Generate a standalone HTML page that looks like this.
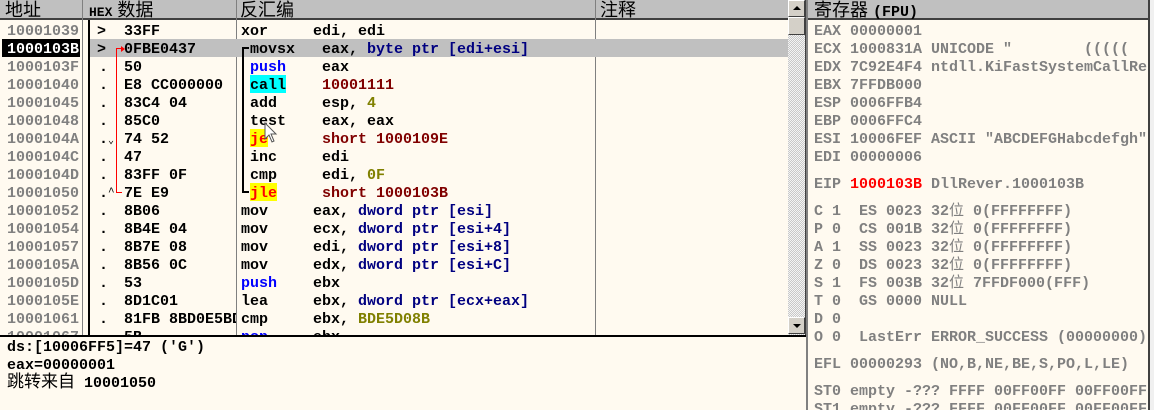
<!DOCTYPE html>
<html><head><meta charset="utf-8"><style>
*{margin:0;padding:0;box-sizing:border-box}
body{width:1154px;height:410px;overflow:hidden;background:#fffaf0;position:relative;font-family:"Liberation Mono","DejaVu Sans Mono",monospace;font-size:15px;font-weight:bold;}
.t{position:absolute;white-space:pre;line-height:21px;height:18px}
.h{position:absolute;white-space:pre;font-family:"Liberation Sans","Noto Sans CJK SC",sans-serif;font-weight:normal;font-size:18px;line-height:20px;top:0}
.g{color:#808080}
.k{color:#000}
.b{color:#0000ff}
.n{color:#000080}
.r{color:#800000}
.o{color:#808000}
.cy{background:#00ffff;line-height:18px;top:auto}
.ye{background:#ffff00;color:#ff0000}
.cj{font-family:"Liberation Mono","Noto Sans CJK SC",monospace;font-weight:normal}
</style></head><body>
<div style="position:absolute;left:0;top:0;width:806px;height:337px;overflow:hidden;border-bottom:2px solid #000">
 <div style="position:absolute;left:0;top:0;width:788px;height:20px;background:#c0c0c0;border-bottom:2px solid #404040"></div>
 <div style="position:absolute;left:82px;top:0;width:1px;height:20px;background:#808080"></div>
 <div style="position:absolute;left:236px;top:0;width:1px;height:335px;background:#808080"></div>
 <div style="position:absolute;left:595px;top:0;width:1px;height:335px;background:#808080"></div>
 <div class="h" style="left:5px">地址</div>
 <div class="h" style="left:89px"><b style="font-family:'Liberation Mono';font-size:13px">HEX</b> 数据</div>
 <div class="h" style="left:240px">反汇编</div>
 <div class="h" style="left:600px">注释</div>
 <div style="position:absolute;left:82px;top:20px;width:1px;height:320px;background:#808080"></div>
 <div style="position:absolute;left:88px;top:20px;width:2px;height:320px;background:#000"></div>
 <div style="position:absolute;left:90px;top:39px;width:698px;height:18px;background:#c0c0c0"></div>
 <div style="position:absolute;left:2px;top:39px;width:78px;height:18px;background:#000"></div>
 <div style="position:absolute;left:116px;top:48px;width:1px;height:145px;background:#ff0000"></div>
 <div style="position:absolute;left:116px;top:48px;width:6px;height:1px;background:#ff0000"></div>
 <div style="position:absolute;left:116px;top:192px;width:6px;height:1px;background:#ff0000"></div>
 <div style="position:absolute;left:121px;top:46px;width:0;height:0;border-left:4px solid #ff0000;border-top:3px solid transparent;border-bottom:3px solid transparent"></div>
 <div style="position:absolute;left:242px;top:47px;width:2px;height:146px;background:#000"></div>
 <div style="position:absolute;left:242px;top:47px;width:7px;height:2px;background:#000"></div>
 <div style="position:absolute;left:242px;top:191px;width:7px;height:2px;background:#000"></div>

 <div class="t g" style="left:7px;top:21px">10001039</div>
 <div class="t" style="left:7px;top:39px;color:#fff">1000103B</div>
 <div class="t g" style="left:7px;top:57px">1000103F</div>
 <div class="t g" style="left:7px;top:75px">10001040</div>
 <div class="t g" style="left:7px;top:93px">10001045</div>
 <div class="t g" style="left:7px;top:111px">10001048</div>
 <div class="t g" style="left:7px;top:129px">1000104A</div>
 <div class="t g" style="left:7px;top:147px">1000104C</div>
 <div class="t g" style="left:7px;top:165px">1000104D</div>
 <div class="t g" style="left:7px;top:183px">10001050</div>
 <div class="t g" style="left:7px;top:201px">10001052</div>
 <div class="t g" style="left:7px;top:219px">10001054</div>
 <div class="t g" style="left:7px;top:237px">10001057</div>
 <div class="t g" style="left:7px;top:255px">1000105A</div>
 <div class="t g" style="left:7px;top:273px">1000105D</div>
 <div class="t g" style="left:7px;top:291px">1000105E</div>
 <div class="t g" style="left:7px;top:309px">10001061</div>
 <div class="t g" style="left:7px;top:327px">10001067</div>

 <div class="t" style="left:97px;top:21px">&gt;</div><div class="t" style="left:124px;top:21px">33FF</div>
 <div class="t" style="left:97px;top:39px">&gt;</div><div class="t" style="left:124px;top:39px">0FBE0437</div>
 <div class="t" style="left:99px;top:57px">.</div><div class="t" style="left:124px;top:57px">50</div>
 <div class="t" style="left:99px;top:75px">.</div><div class="t" style="left:124px;top:75px">E8 CC000000</div>
 <div class="t" style="left:99px;top:93px">.</div><div class="t" style="left:124px;top:93px">83C4 04</div>
 <div class="t" style="left:99px;top:111px">.</div><div class="t" style="left:124px;top:111px">85C0</div>
 <div class="t" style="left:99px;top:129px">.<span style="font-size:10px;font-weight:normal">&#8964;</span></div><div class="t" style="left:124px;top:129px">74 52</div>
 <div class="t" style="left:99px;top:147px">.</div><div class="t" style="left:124px;top:147px">47</div>
 <div class="t" style="left:99px;top:165px">.</div><div class="t" style="left:124px;top:165px">83FF 0F</div>
 <div class="t" style="left:99px;top:183px">.<span style="font-size:11px;font-weight:normal;vertical-align:top">^</span></div><div class="t" style="left:124px;top:183px">7E E9</div>
 <div class="t" style="left:99px;top:201px">.</div><div class="t" style="left:124px;top:201px">8B06</div>
 <div class="t" style="left:99px;top:219px">.</div><div class="t" style="left:124px;top:219px">8B4E 04</div>
 <div class="t" style="left:99px;top:237px">.</div><div class="t" style="left:124px;top:237px">8B7E 08</div>
 <div class="t" style="left:99px;top:255px">.</div><div class="t" style="left:124px;top:255px">8B56 0C</div>
 <div class="t" style="left:99px;top:273px">.</div><div class="t" style="left:124px;top:273px">53</div>
 <div class="t" style="left:99px;top:291px">.</div><div class="t" style="left:124px;top:291px">8D1C01</div>
 <div style="position:absolute;left:90px;top:309px;width:146px;height:18px;overflow:hidden"><div class="t" style="left:9px;top:0">.</div><div class="t" style="left:34px;top:0">81FB 8BD0E5BD</div></div>
 <div class="t" style="left:124px;top:327px">5B</div>

 <div class="t" style="left:241px;top:21px">xor</div><div class="t" style="left:313px;top:21px">edi, edi</div>
 <div class="t" style="left:250px;top:39px">movsx</div><div class="t" style="left:322px;top:39px">eax, <span class="n">byte ptr [edi+esi]</span></div>
 <div class="t b" style="left:250px;top:57px">push</div><div class="t" style="left:322px;top:57px">eax</div>
 <div class="t" style="left:250px;top:75px;background:#00ffff">call</div><div class="t r" style="left:322px;top:75px">10001111</div>
 <div class="t" style="left:250px;top:93px">add</div><div class="t" style="left:322px;top:93px">esp, <span class="o">4</span></div>
 <div class="t" style="left:250px;top:111px">test</div><div class="t" style="left:322px;top:111px">eax, eax</div>
 <div class="t ye" style="left:250px;top:129px">je</div><div class="t r" style="left:322px;top:129px">short 1000109E</div>
 <div class="t" style="left:250px;top:147px">inc</div><div class="t" style="left:322px;top:147px">edi</div>
 <div class="t" style="left:250px;top:165px">cmp</div><div class="t" style="left:322px;top:165px">edi, <span class="o">0F</span></div>
 <div class="t ye" style="left:250px;top:183px">jle</div><div class="t r" style="left:322px;top:183px">short 1000103B</div>
 <div class="t" style="left:241px;top:201px">mov</div><div class="t" style="left:313px;top:201px">eax, <span class="n">dword ptr [esi]</span></div>
 <div class="t" style="left:241px;top:219px">mov</div><div class="t" style="left:313px;top:219px">ecx, <span class="n">dword ptr [esi+4]</span></div>
 <div class="t" style="left:241px;top:237px">mov</div><div class="t" style="left:313px;top:237px">edi, <span class="n">dword ptr [esi+8]</span></div>
 <div class="t" style="left:241px;top:255px">mov</div><div class="t" style="left:313px;top:255px">edx, <span class="n">dword ptr [esi+C]</span></div>
 <div class="t b" style="left:241px;top:273px">push</div><div class="t" style="left:313px;top:273px">ebx</div>
 <div class="t" style="left:241px;top:291px">lea</div><div class="t" style="left:313px;top:291px">ebx, <span class="n">dword ptr [ecx+eax]</span></div>
 <div class="t" style="left:241px;top:309px">cmp</div><div class="t" style="left:313px;top:309px">ebx, <span class="o">BDE5D08B</span></div>
 <div class="t b" style="left:241px;top:327px">pop</div><div class="t" style="left:313px;top:327px">ebx</div>
 <svg style="position:absolute;left:264px;top:122px" width="16" height="24" viewBox="0 0 16 24"><path d="M1 1 L1 17 L5 13 L8 20 L10 19 L7 12 L12 12 Z" fill="#fff" stroke="#555" stroke-width="1"/></svg>
 <div style="position:absolute;left:788px;top:0;width:17px;height:335px;background:repeating-conic-gradient(#c8c8c8 0 25%,#f4f4f4 0 50%) 0 0/2px 2px"></div>
 <div style="position:absolute;left:788px;top:0;width:17px;height:17px;background:#d4d0c8;border:1px solid;border-color:#fff #404040 #404040 #fff"></div>
 <div style="position:absolute;left:793px;top:6px;border-left:4px solid transparent;border-right:4px solid transparent;border-bottom:4px solid #000"></div>
 <div style="position:absolute;left:788px;top:17px;width:17px;height:18px;background:#d4d0c8;border:1px solid;border-color:#fff #404040 #404040 #fff"></div>
 <div style="position:absolute;left:788px;top:317px;width:17px;height:17px;background:#d4d0c8;border:1px solid;border-color:#fff #404040 #404040 #fff"></div>
 <div style="position:absolute;left:793px;top:324px;border-left:4px solid transparent;border-right:4px solid transparent;border-top:4px solid #000"></div>
 <div style="position:absolute;left:805px;top:0;width:1px;height:337px;background:#404040"></div>
</div>
<div class="t" style="left:7px;top:337px">ds:[10006FF5]=47 ('G')</div>
<div class="t" style="left:7px;top:355px">eax=00000001</div>
<div class="t" style="left:7px;top:373px"><span class="cj" style="font-size:17px">跳转来自</span> 10001050</div>
<div style="position:absolute;left:806px;top:0;width:2px;height:410px;background:#808080"></div>
<div style="position:absolute;left:808px;top:0;width:340px;height:20px;background:#c0c0c0;border-bottom:2px solid #404040"></div>
<div class="h" style="left:814px">寄存器 <b style="font-family:'Liberation Mono';font-size:15px">(FPU)</b></div>
<div style="position:absolute;left:1148px;top:0;width:2px;height:410px;background:#404040"></div>
<div style="position:absolute;left:1150px;top:0;width:4px;height:410px;background:#f0f0f0"></div>
<div style="position:absolute;left:808px;top:20px;width:340px;height:390px;overflow:hidden" class="g">
 <div class="t" style="left:6px;top:1px">EAX 00000001</div>
 <div class="t" style="left:6px;top:19px">ECX 1000831A UNICODE "        (((((</div>
 <div class="t" style="left:6px;top:37px">EDX 7C92E4F4 ntdll.KiFastSystemCallRet</div>
 <div class="t" style="left:6px;top:55px">EBX 7FFDB000</div>
 <div class="t" style="left:6px;top:73px">ESP 0006FFB4</div>
 <div class="t" style="left:6px;top:91px">EBP 0006FFC4</div>
 <div class="t" style="left:6px;top:109px">ESI 10006FEF ASCII "ABCDEFGHabcdefgh"</div>
 <div class="t" style="left:6px;top:127px">EDI 00000006</div>
 <div class="t" style="left:6px;top:154px">EIP <span style="color:#ff0000">1000103B</span> DllRever.1000103B</div>
 <div class="t" style="left:6px;top:181px">C 1  ES 0023 32<span class="cj">位</span> 0(FFFFFFFF)</div>
 <div class="t" style="left:6px;top:199px">P 0  CS 001B 32<span class="cj">位</span> 0(FFFFFFFF)</div>
 <div class="t" style="left:6px;top:217px">A 1  SS 0023 32<span class="cj">位</span> 0(FFFFFFFF)</div>
 <div class="t" style="left:6px;top:235px">Z 0  DS 0023 32<span class="cj">位</span> 0(FFFFFFFF)</div>
 <div class="t" style="left:6px;top:253px">S 1  FS 003B 32<span class="cj">位</span> 7FFDF000(FFF)</div>
 <div class="t" style="left:6px;top:271px">T 0  GS 0000 NULL</div>
 <div class="t" style="left:6px;top:289px">D 0</div>
 <div class="t" style="left:6px;top:307px">O 0  LastErr ERROR_SUCCESS (00000000)</div>
 <div class="t" style="left:6px;top:334px">EFL 00000293 (NO,B,NE,BE,S,PO,L,LE)</div>
 <div class="t" style="left:6px;top:361px">ST0 empty -??? FFFF 00FF00FF 00FF00FF</div>
 <div class="t" style="left:6px;top:379px">ST1 empty -??? FFFF 00FF00FF 00FF00FF</div>
</div>
</body></html>
